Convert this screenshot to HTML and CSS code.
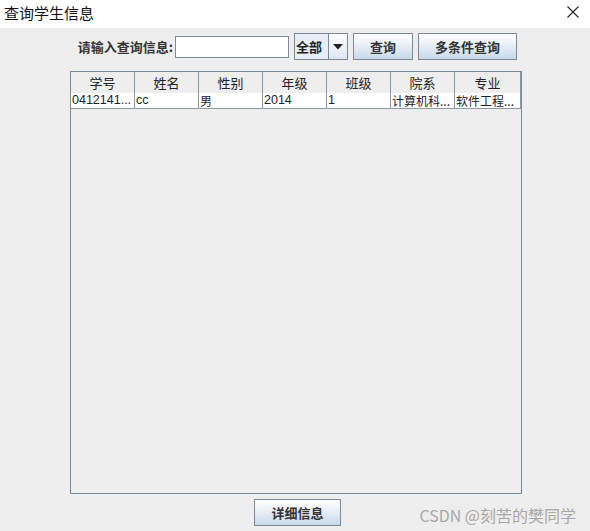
FILE: index.html
```html
<!DOCTYPE html>
<html lang="zh">
<head>
<meta charset="utf-8">
<link rel="stylesheet" href="styles.css">
</head>
<body>
<div class="titlebar">
  <span class="title">查询学生信息</span>
  <svg class="close" width="12" height="12" viewBox="0 0 12 12"><path d="M0.5 0.5L11.5 11.5M11.5 0.5L0.5 11.5" stroke="#222" stroke-width="1.1" fill="none"/></svg>
</div>
<div class="content">
  <div class="toolbar">
    <span class="label">请输入查询信息:</span>
    <div class="input"></div>
    <div class="combo"><span class="combo-text">全部</span><span class="combo-arrow"><svg width="10" height="6" viewBox="0 0 10 6"><path d="M0 0H10L5 5.5Z" fill="#222"/></svg></span></div>
    <button class="btn btn-query">查询</button>
    <button class="btn btn-multi">多条件查询</button>
  </div>
  <div class="tablebox">
    <div class="row head">
      <div class="cell">学号</div><div class="cell">姓名</div><div class="cell">性别</div><div class="cell">年级</div><div class="cell">班级</div><div class="cell">院系</div><div class="cell">专业</div>
    </div>
    <div class="row data">
      <div class="cell">0412141...</div><div class="cell">cc</div><div class="cell">男</div><div class="cell">2014</div><div class="cell">1</div><div class="cell">计算机科...</div><div class="cell">软件工程...</div>
    </div>
  </div>
  <div class="bottom">
    <button class="btn btn-detail">详细信息</button>
  </div>
</div>
<div class="watermark">CSDN @刻苦的樊同学</div>
</body>
</html>
```
FILE: styles.css
```css
html, body {
  margin: 0;
  padding: 0;
}
body {
  width: 590px;
  height: 531px;
  background: #eeeeee;
  font-family: "Noto Sans CJK SC", "Liberation Sans", sans-serif;
  position: relative;
  overflow: hidden;
  color: #222;
}
.titlebar {
  height: 28px;
  background: #ffffff;
  display: flex;
  align-items: center;
  justify-content: space-between;
  padding: 0 11px 0 4px;
}
.title {
  font-size: 15px;
  color: #111;
  margin-top: -4px;
}
.close {
  margin-top: -4px;
}
.content {
  display: flex;
  flex-direction: column;
}
.toolbar {
  display: flex;
  align-items: center;
  margin-top: 5px;
  height: 27px;
  padding-left: 76px;
}
.label {
  width: 97px;
  text-align: right;
  font-size: 13px;
  font-weight: bold;
  color: #333;
  margin-right: 2px;
  white-space: nowrap;
}
.input {
  width: 112px;
  height: 20px;
  background: #fff;
  border: 1px solid #7a8a99;
  margin-right: 5px;
}
.combo {
  display: flex;
  height: 25px;
  border: 1px solid #7a8a99;
  margin-right: 5px;
}
.combo-text {
  width: 32px;
  background: #e8eef5;
  border-right: 1px solid #7a8a99;
  font-size: 13px;
  font-weight: bold;
  line-height: 25px;
  padding-left: 1px;
  color: #222;
}
.combo-arrow {
  width: 18px;
  display: flex;
  align-items: center;
  justify-content: center;
  background: linear-gradient(#ffffff, #dde7f2);
}
.btn {
  height: 27px;
  border: 1px solid #7a8a99;
  background: linear-gradient(#ffffff 0%, #eef3f8 35%, #c9d9ea 100%);
  font-family: "Noto Sans CJK SC", sans-serif;
  font-size: 13px;
  font-weight: bold;
  color: #333;
  padding: 0;
  margin: 0;
}
.btn-query {
  width: 60px;
  margin-right: 5px;
}
.btn-multi {
  width: 99px;
}
.tablebox {
  margin: 11px 0 0 70px;
  width: 450px;
  height: 421px;
  border: 1px solid #7a8a99;
  background: #eeeeee;
}
.row {
  display: grid;
  grid-template-columns: repeat(6, 64px) 66px;
}
.head {
  height: 21px;
}
.head .cell {
  background: #eeeeee;
  border-right: 1px solid #8a9aab;
  border-bottom: 1px solid #8a9aab;
  text-align: center;
  font-size: 13px;
  line-height: 21px;
  color: #222;
}
.data {
  height: 16px;
}
.data .cell {
  background: #ffffff;
  border-right: 1px solid #8a9aab;
  border-bottom: 1px solid #8a9aab;
  font-size: 12px;
  line-height: 15px;
  padding-left: 1px;
  white-space: nowrap;
  overflow: hidden;
  color: #222;
}
.data .cell:nth-child(1), .data .cell:nth-child(2), .data .cell:nth-child(4), .data .cell:nth-child(5) {
  font-family: "Liberation Sans", sans-serif;
  font-size: 12.5px;
}
.head .cell, .data .cell {
  box-sizing: border-box;
}
.bottom {
  display: flex;
  margin-top: 5px;
  padding-left: 254px;
}
.btn-detail {
  width: 87px;
}
.watermark {
  position: absolute;
  right: 14px;
  bottom: 4px;
  font-size: 16px;
  color: #a8a8a8;
  font-family: "Noto Sans CJK SC", sans-serif;
}
```
